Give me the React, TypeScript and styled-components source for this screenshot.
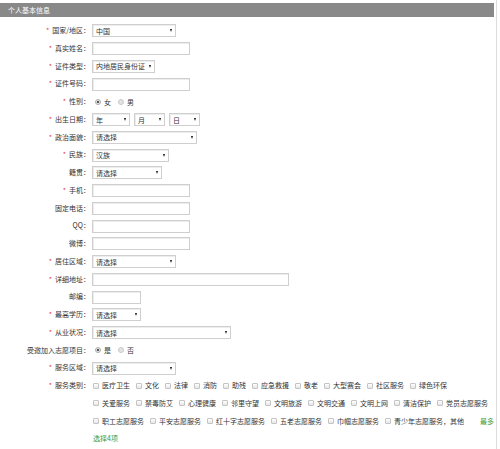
import React from "react";
import styled, { createGlobalStyle } from "styled-components";

const GlobalStyle = createGlobalStyle`
  html, body { margin: 0; padding: 0; background: #fff; }
  body {
    font-family: "Noto Sans CJK SC", "Liberation Sans", sans-serif;
    font-size: 7px;
    color: #333;
  }
`;

const Panel = styled.div`
  width: 497px;
  height: 449px;
  box-sizing: border-box;
  border-right: 1px solid #dcdcdc;
  padding-top: 3px;
`;

const Header = styled.div`
  width: 494px;
  height: 14px;
  box-sizing: border-box;
  background: #898989;
  color: #fff;
  font-size: 7px;
  line-height: 14px;
  padding-left: 8px;
`;

const Form = styled.div`
  padding-top: 5px;
`;

const Row = styled.div<{ $top?: boolean }>`
  display: flex;
  align-items: ${(p) => (p.$top ? "flex-start" : "center")};
  height: ${(p) => (p.$top ? "auto" : "17.75px")};
`;

const Label = styled.div`
  width: 90px;
  flex: none;
  text-align: right;
  line-height: 17.75px;
  white-space: nowrap;
`;

const Star = styled.span`
  color: #e4393c;
  margin-right: 3px;
`;

const Field = styled.div`
  margin-left: 2px;
  display: flex;
  align-items: center;
  gap: 4px;
`;

const TextInput = styled.input<{ $w: number }>`
  width: ${(p) => p.$w}px;
  height: 13px;
  box-sizing: border-box;
  border: 1px solid #cfcfcf;
  box-shadow: inset 1px 1px 0 #ededed;
  padding: 0 3px;
  margin: 0;
  font-size: 7px;
  font-family: inherit;
  outline: none;
  background: #fff;
`;

const SelectBox = styled.span<{ $w: number }>`
  position: relative;
  display: inline-block;
  width: ${(p) => p.$w}px;
  height: 13px;
  &::after {
    content: "";
    position: absolute;
    right: 4px;
    top: 5px;
    border-left: 1.5px solid transparent;
    border-right: 1.5px solid transparent;
    border-top: 3px solid #111;
    pointer-events: none;
  }
`;

const NativeSelect = styled.select`
  appearance: none;
  -webkit-appearance: none;
  display: block;
  width: 100%;
  height: 100%;
  box-sizing: border-box;
  border: 1px solid #cfcfcf;
  box-shadow: inset 1px 1px 0 #ededed;
  border-radius: 0;
  margin: 0;
  padding: 0 0 0 3px;
  font-size: 7px;
  font-family: inherit;
  color: #333;
  background: #fff;
  outline: none;
`;

const RadioGroup = styled.div`
  display: flex;
  align-items: center;
  padding-left: 5px;
`;

const RadioItem = styled.span`
  display: inline-flex;
  align-items: center;
  margin-right: 7px;
`;

const RadioDot = styled.span<{ $checked?: boolean }>`
  display: inline-block;
  width: 6px;
  height: 6px;
  box-sizing: border-box;
  border-radius: 50%;
  border: 1px solid ${(p) => (p.$checked ? "#aaa" : "#c8c8c8")};
  background: ${(p) =>
    p.$checked
      ? "radial-gradient(circle, #555 0 1.2px, #eee 1.6px)"
      : "#e4e4e4"};
  margin-right: 3px;
`;

const CheckFlow = styled.div`
  width: 402px;
  margin-left: 1px;
  line-height: 17.75px;
`;

const CheckItem = styled.span`
  display: inline-block;
  white-space: nowrap;
  margin-right: 6px;
`;

const CheckBox = styled.span`
  display: inline-block;
  width: 6px;
  height: 6px;
  box-sizing: border-box;
  border: 1px solid #c4c4c4;
  border-radius: 1px;
  background: linear-gradient(#fff, #e6e6e6);
  margin-right: 3px;
  vertical-align: -0.5px;
`;

const Hint = styled.span<{ $gap?: number }>`
  display: inline-block;
  white-space: nowrap;
  color: #3a9a3a;
  margin-left: ${(p) => p.$gap ?? 0}px;
`;

function Sel({ w, value }: { w: number; value: string }) {
  return (
    <SelectBox $w={w}>
      <NativeSelect defaultValue={value}>
        <option value={value}>{value}</option>
      </NativeSelect>
    </SelectBox>
  );
}

function L({ req, children }: { req?: boolean; children: React.ReactNode }) {
  return (
    <Label>
      {req && <Star>*</Star>}
      {children}
    </Label>
  );
}

const services = [
  "医疗卫生", "文化", "法律", "消防", "助残", "应急救援", "敬老", "大型赛会", "社区服务", "绿色环保",
  "关爱服务", "禁毒防艾", "心理健康", "邻里守望", "文明旅游", "文明交通", "文明上网", "清洁保护", "党员志愿服务",
  "职工志愿服务", "平安志愿服务", "红十字志愿服务", "五老志愿服务", "巾帼志愿服务", "青少年志愿服务，其他",
];

export default function App() {
  return (
    <>
      <GlobalStyle />
      <Panel>
        <Header>个人基本信息</Header>
        <Form>
          <Row><L req>国家/地区：</L><Field><Sel w={84} value="中国" /></Field></Row>
          <Row><L req>真实姓名：</L><Field><TextInput $w={98} /></Field></Row>
          <Row><L req>证件类型：</L><Field><Sel w={63} value="内地居民身份证" /></Field></Row>
          <Row><L req>证件号码：</L><Field><TextInput $w={98} /></Field></Row>
          <Row>
            <L req>性别：</L>
            <RadioGroup>
              <RadioItem><RadioDot $checked />女</RadioItem>
              <RadioItem><RadioDot />男</RadioItem>
            </RadioGroup>
          </Row>
          <Row>
            <L req>出生日期：</L>
            <Field>
              <Sel w={38} value="年" />
              <Sel w={31} value="月" />
              <Sel w={31} value="日" />
            </Field>
          </Row>
          <Row><L req>政治面貌：</L><Field><Sel w={105} value="请选择" /></Field></Row>
          <Row><L req>民族：</L><Field><Sel w={77} value="汉族" /></Field></Row>
          <Row><L>籍贯：</L><Field><Sel w={70} value="请选择" /></Field></Row>
          <Row><L req>手机：</L><Field><TextInput $w={98} /></Field></Row>
          <Row><L>固定电话：</L><Field><TextInput $w={98} /></Field></Row>
          <Row><L>QQ：</L><Field><TextInput $w={98} /></Field></Row>
          <Row><L>微博：</L><Field><TextInput $w={98} /></Field></Row>
          <Row><L req>居住区域：</L><Field><Sel w={84} value="请选择" /></Field></Row>
          <Row><L req>详细地址：</L><Field><TextInput $w={197} /></Field></Row>
          <Row><L>邮编：</L><Field><TextInput $w={49} /></Field></Row>
          <Row><L req>最高学历：</L><Field><Sel w={49} value="请选择" /></Field></Row>
          <Row><L req>从业状况：</L><Field><Sel w={139} value="请选择" /></Field></Row>
          <Row>
            <L>受邀加入志愿项目：</L>
            <RadioGroup>
              <RadioItem><RadioDot $checked />是</RadioItem>
              <RadioItem><RadioDot />否</RadioItem>
            </RadioGroup>
          </Row>
          <Row><L req>服务区域：</L><Field><Sel w={84} value="请选择" /></Field></Row>
          <Row $top>
            <L req>服务类别：</L>
            <Field>
              <CheckFlow>
                {services.map((s) => (
                  <CheckItem key={s}><CheckBox />{s}</CheckItem>
                ))}
                <Hint $gap={10}>最多</Hint>
                <Hint>选择4项</Hint>
              </CheckFlow>
            </Field>
          </Row>
        </Form>
      </Panel>
    </>
  );
}
